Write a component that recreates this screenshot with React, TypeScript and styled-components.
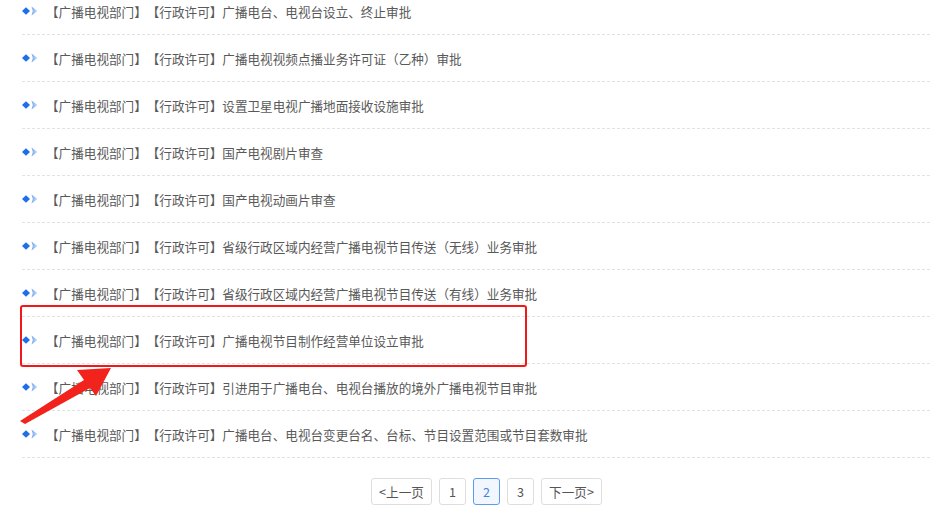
import styled, { createGlobalStyle } from 'styled-components';

const GlobalStyle = createGlobalStyle`
  html, body {
    margin: 0;
    padding: 0;
    background: #fff;
  }
  body {
    font-family: "Noto Sans CJK SC", "Noto Sans", "Liberation Sans", sans-serif;
  }
`;

const items = [
  '广播电台、电视台设立、终止审批',
  '广播电视视频点播业务许可证（乙种）审批',
  '设置卫星电视广播地面接收设施审批',
  '国产电视剧片审查',
  '国产电视动画片审查',
  '省级行政区域内经营广播电视节目传送（无线）业务审批',
  '省级行政区域内经营广播电视节目传送（有线）业务审批',
  '广播电视节目制作经营单位设立审批',
  '引进用于广播电台、电视台播放的境外广播电视节目审批',
  '广播电台、电视台变更台名、台标、节目设置范围或节目套数审批',
];

const pages = [
  { label: '<上一页', wide: true },
  { label: '1' },
  { label: '2', active: true },
  { label: '3' },
  { label: '下一页>', wide: true },
];

const Page = styled.div`
  position: relative;
  width: 933px;
  height: 523px;
  overflow: hidden;
`;

const List = styled.ul`
  list-style: none;
  margin: -12px 0 0;
  padding: 0 3px 0 22px;
`;

const Row = styled.li`
  display: flex;
  align-items: center;
  height: 46px;
  border-bottom: 1px dashed #e2e2e2;
`;

const Bullet = styled.svg`
  flex: none;
  width: 16px;
  height: 12px;
`;

const Title = styled.span`
  margin-left: 8px;
  font-size: 12.6px;
  color: #595959;
  white-space: nowrap;
  text-spacing-trim: space-all;
`;

const Pager = styled.div`
  display: flex;
  gap: 7px;
  margin-top: 20px;
  padding-left: 371px;
`;

const PageButton = styled.button<{ $active?: boolean; $wide?: boolean }>`
  height: 27px;
  width: ${p => (p.$wide ? '61px' : '27px')};
  padding: 0;
  border: 1px solid ${p => (p.$active ? '#5b9bf0' : '#dedede')};
  border-radius: 3px;
  background: ${p => (p.$active ? '#f2f7ff' : '#fff')};
  color: ${p => (p.$active ? '#3d84ea' : '#555')};
  font-family: inherit;
  font-size: 12.6px;
  cursor: pointer;
`;

const Highlight = styled.div`
  position: absolute;
  left: 20px;
  top: 305px;
  width: 503px;
  height: 58px;
  border: 2px solid #f31818;
  border-radius: 3px;
`;

const Arrow = styled.svg`
  position: absolute;
  left: 0;
  top: 0;
  width: 933px;
  height: 523px;
  pointer-events: none;
`;

function BulletIcon() {
  return (
    <Bullet viewBox="0 0 16 12">
      <defs>
        <linearGradient id="chev" x1="0" x2="1" y1="0" y2="0">
          <stop offset="0" stopColor="#6fa4ef" />
          <stop offset="1" stopColor="#cfe1fb" />
        </linearGradient>
      </defs>
      <polygon points="0,6 4,2.2 8,6 4,9.8" fill="#1f6fe6" />
      <polygon points="9.5,1.5 15.5,6 9.5,10.5 10.8,6" fill="url(#chev)" />
    </Bullet>
  );
}

export default function App() {
  return (
    <Page>
      <GlobalStyle />
      <List>
        {items.map(item => (
          <Row key={item}>
            <BulletIcon />
            <Title>【广播电视部门】【行政许可】{item}</Title>
          </Row>
        ))}
      </List>
      <Pager>
        {pages.map(p => (
          <PageButton key={p.label} type="button" $active={p.active} $wide={p.wide}>
            {p.label}
          </PageButton>
        ))}
      </Pager>
      <Highlight />
      <Arrow viewBox="0 0 933 523">
        <polygon
          points="20,421 84,380 77,370 111,368 96,396 90,388 25,424"
          fill="#f2231c"
        />
      </Arrow>
    </Page>
  );
}
